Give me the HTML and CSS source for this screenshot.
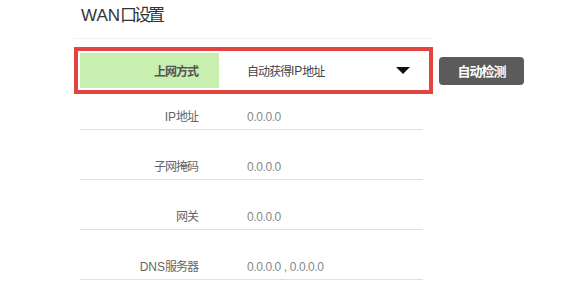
FILE: index.html
```html
<!DOCTYPE html>
<html lang="zh-CN">
<head>
<meta charset="utf-8">
<title>WAN口设置</title>
<link rel="stylesheet" href="styles.css">
</head>
<body>
<div class="page">
  <h1 class="title">WAN<span class="cjk">口设置</span></h1>
  <div class="sep"></div>
  <div class="mode-line">
    <div class="hl">
      <div class="mode-row">
        <div class="mode-label"><span class="cjk">上网方式</span></div>
        <div class="mode-select">
          <span class="cjk">自动获得</span>IP<span class="cjk">地址</span>
          <span class="arrow"></span>
        </div>
      </div>
    </div>
    <button class="detect"><span class="cjk">自动检测</span></button>
  </div>
  <div class="rows">
    <div class="row first">
      <div class="label">IP<span class="cjk">地址</span></div>
      <div class="value">0.0.0.0</div>
    </div>
    <div class="row">
      <div class="label"><span class="cjk">子网掩码</span></div>
      <div class="value">0.0.0.0</div>
    </div>
    <div class="row">
      <div class="label"><span class="cjk">网关</span></div>
      <div class="value">0.0.0.0</div>
    </div>
    <div class="row">
      <div class="label">DNS<span class="cjk">服务器</span></div>
      <div class="value">0.0.0.0 , 0.0.0.0</div>
    </div>
  </div>
</div>
</body>
</html>
```

FILE: styles.css
```css
html, body {
  margin: 0;
  padding: 0;
  background: #ffffff;
}
body {
  font-family: "Liberation Sans", "Noto Sans CJK SC", sans-serif;
  width: 570px;
  height: 304px;
  overflow: hidden;
}
.page {
  padding-left: 80px;
}
.title {
  margin: 0;
  padding: 5px 0 0 1px;
  height: 34px;
  box-sizing: border-box;
  font-size: 17px;
  line-height: 22px;
  font-weight: normal;
  color: #333333;
}
.title .cjk {
  letter-spacing: -3px;
}
.sep {
  margin-left: -7px;
  width: 359px;
  height: 0;
  border-top: 1px solid #f0f5e8;
  margin-top: 4px;
}
.mode-line {
  display: flex;
  align-items: center;
  margin-top: 8px;
  margin-left: -6px;
}
.hl {
  border: 4px solid #e2453f;
  padding: 2px;
  width: 347px;
}
.mode-row {
  display: flex;
  height: 35px;
  align-items: stretch;
}
.mode-label {
  width: 139px;
  box-sizing: border-box;
  background: #c8eeb0;
  padding-right: 21px;
  display: flex;
  align-items: center;
  justify-content: flex-end;
  font-size: 12px;
  color: #555555;
  font-weight: bold;
}
.mode-select {
  flex: 1;
  display: flex;
  align-items: center;
  padding-left: 28px;
  padding-right: 17px;
  font-size: 12px;
  color: #444444;
}
.cjk {
  letter-spacing: -1px;
}
.arrow {
  margin-left: auto;
  width: 0;
  height: 0;
  border-left: 7px solid transparent;
  border-right: 7px solid transparent;
  border-top: 7px solid #111111;
}
.detect {
  margin-left: 6px;
  width: 85px;
  height: 28px;
  border: none;
  border-radius: 4px;
  background: #5b5b5b;
  color: #ffffff;
  font-family: inherit;
  font-size: 13px;
  font-weight: bold;
  padding: 0;
}
.rows {
  width: 343px;
}
.row {
  display: flex;
  align-items: flex-end;
  box-sizing: content-box;
  height: 43px;
  padding-bottom: 6px;
  border-bottom: 1px solid #d6ebbd;
  font-size: 12px;
  line-height: 12px;
}
.row.first {
  height: 29px;
}
.label {
  width: 139px;
  box-sizing: border-box;
  padding-right: 21px;
  text-align: right;
  color: #666666;
}
.value {
  padding-left: 28px;
  color: #888888;
  letter-spacing: -0.4px;
}
```
